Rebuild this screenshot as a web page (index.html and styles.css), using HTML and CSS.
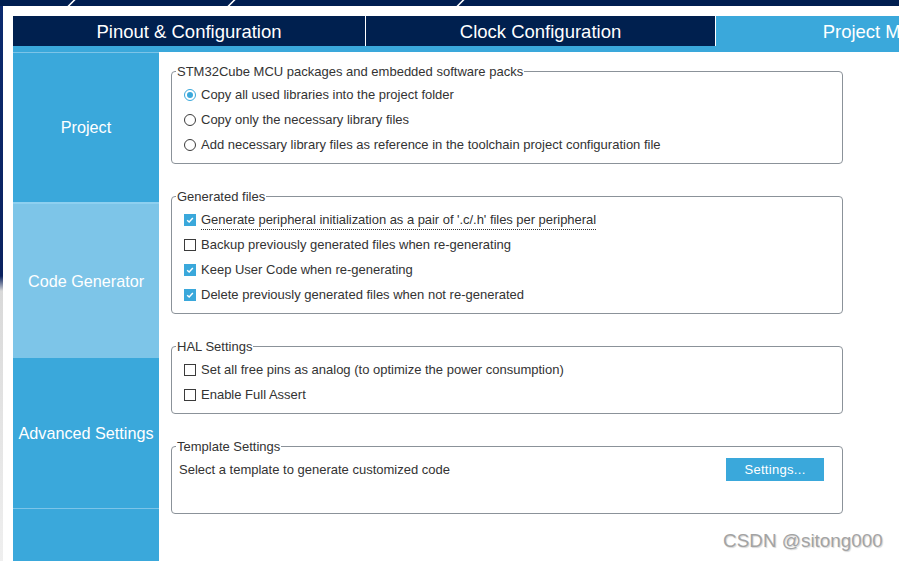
FILE: index.html
```html
<!DOCTYPE html>
<html lang="en">
<head>
<meta charset="utf-8">
<title>Project Manager - Code Generator</title>
<link rel="stylesheet" href="styles.css">
</head>
<body>
<div class="screen">
  <div class="topstrip">
    <svg class="topstrip-lines" width="899" height="6" viewBox="0 0 899 6">
      <path d="M68 6.5 L75 -0.5 M228 6.5 L235 -0.5 M457 6.5 L464 -0.5" stroke="#ffffff" stroke-width="1.6" fill="none"/>
    </svg>
  </div>
  <div class="desk">
    <div class="edge"></div>
    <div class="window">
      <nav class="tabs">
        <div class="tab">Pinout &amp; Configuration</div>
        <div class="tab">Clock Configuration</div>
        <div class="tab active">Project Manager</div>
      </nav>
      <div class="subbar"></div>
      <div class="content">
        <aside class="sidebar">
          <div class="side-item first">Project</div>
          <div class="side-item selected">Code Generator</div>
          <div class="side-item">Advanced Settings</div>
          <div class="side-item last"></div>
        </aside>
        <main class="panel">
          <fieldset class="group rows3">
            <legend>STM32Cube MCU packages and embedded software packs</legend>
            <div class="opt"><span class="radio on"></span><span class="label">Copy all used libraries into the project folder</span></div>
            <div class="opt"><span class="radio"></span><span class="label">Copy only the necessary library files</span></div>
            <div class="opt"><span class="radio"></span><span class="label">Add necessary library files as reference in the toolchain project configuration file</span></div>
          </fieldset>
          <fieldset class="group">
            <legend>Generated files</legend>
            <div class="opt"><span class="check on"><svg width="12" height="12" viewBox="0 0 12 12"><path d="M2.6 6.2 L5 8.5 L9.4 3.6" stroke="#fff" stroke-width="1.7" fill="none"/></svg></span><span class="label focus">Generate peripheral initialization as a pair of '.c/.h' files per peripheral</span></div>
            <div class="opt"><span class="check"></span><span class="label">Backup previously generated files when re-generating</span></div>
            <div class="opt"><span class="check on"><svg width="12" height="12" viewBox="0 0 12 12"><path d="M2.6 6.2 L5 8.5 L9.4 3.6" stroke="#fff" stroke-width="1.7" fill="none"/></svg></span><span class="label">Keep User Code when re-generating</span></div>
            <div class="opt"><span class="check on"><svg width="12" height="12" viewBox="0 0 12 12"><path d="M2.6 6.2 L5 8.5 L9.4 3.6" stroke="#fff" stroke-width="1.7" fill="none"/></svg></span><span class="label">Delete previously generated files when not re-generated</span></div>
          </fieldset>
          <fieldset class="group">
            <legend>HAL Settings</legend>
            <div class="opt"><span class="check"></span><span class="label">Set all free pins as analog (to optimize the power consumption)</span></div>
            <div class="opt"><span class="check"></span><span class="label">Enable Full Assert</span></div>
          </fieldset>
          <fieldset class="group template">
            <legend>Template Settings</legend>
            <div class="opt plain"><span class="label">Select a template to generate customized code</span><button class="btn" type="button">Settings...</button></div>
          </fieldset>
        </main>
      </div>
    </div>
  </div>
  <div class="watermark">CSDN @sitong000</div>
</div>
</body>
</html>
```

FILE: styles.css
```css
html, body {
  margin: 0;
  padding: 0;
}

body {
  width: 899px;
  height: 561px;
  overflow: hidden;
  background: #ffffff;
  font-family: "Liberation Sans", Arial, sans-serif;
}

.screen {
  position: relative;
  width: 899px;
  height: 561px;
  display: flex;
  flex-direction: column;
  overflow: hidden;
}

.topstrip {
  height: 6px;
  background: #001e50;
  flex-shrink: 0;
  overflow: hidden;
}

.topstrip-lines {
  display: block;
}

.desk {
  flex: 1;
  display: flex;
  min-height: 0;
}

.edge {
  width: 3px;
  flex-shrink: 0;
  background: linear-gradient(#0b2a6e 0, #0a2260 270px, #d9d9d9 285px, #efefef 100%);
}

.window {
  flex: 1;
  display: flex;
  flex-direction: column;
  padding: 10px 0 0 10px;
  background: #ffffff;
  min-width: 0;
}

.tabs {
  display: flex;
  height: 30px;
  flex-shrink: 0;
  overflow: hidden;
}

.tab {
  flex-shrink: 0;
  box-sizing: border-box;
  background: #00204f;
  color: #ffffff;
  font-size: 18.5px;
  line-height: 31px;
  text-align: center;
  white-space: nowrap;
  border-right: 1px solid #ffffff;
}

.tab:nth-child(1) {
  width: 353px;
}

.tab:nth-child(2) {
  width: 350px;
}

.tab.active {
  width: 349px;
  background: #3aa8db;
  border-right: none;
}

.subbar {
  height: 6px;
  background: #3aa8db;
  flex-shrink: 0;
}

.content {
  flex: 1;
  display: flex;
  min-height: 0;
}

.sidebar {
  width: 146px;
  flex-shrink: 0;
  display: flex;
  flex-direction: column;
  background: #3aa8db;
}

.side-item {
  box-sizing: border-box;
  display: flex;
  align-items: center;
  justify-content: center;
  color: #ffffff;
  font-size: 16.2px;
  white-space: nowrap;
  height: 150px;
  flex-shrink: 0;
}

.side-item.first {
  border-top: 1px solid #7cc4e8;
}

.side-item.selected {
  height: 156px;
  background: #7dc5e8;
  border-top: 2px solid #8ed0f0;
}

.side-item.last {
  flex: 1;
  height: auto;
  border-top: 1px solid #7cc4e8;
}

.panel {
  flex: 1;
  display: flex;
  flex-direction: column;
  gap: 25px;
  padding: 12px 0 0 12px;
  color: #333333;
  font-size: 13px;
}

.group {
  box-sizing: border-box;
  width: 672px;
  margin: 0;
  min-inline-size: 0;
  border: 1px solid #8b9299;
  border-radius: 4px;
  padding: 3px 0 6px 0;
}

.group legend {
  margin-left: 4px;
  padding: 0 1px;
  line-height: 15px;
  font-size: 13px;
  color: #333333;
}

.opt {
  display: flex;
  align-items: center;
  height: 25px;
  padding-left: 12px;
  white-space: nowrap;
}

.opt.plain {
  padding-left: 7px;
}

.template .opt.plain {
  margin-bottom: 25px;
}

.label {
  line-height: 15px;
}

.label.focus {
  padding-bottom: 2px;
  margin-bottom: -3px;
  border-bottom: 1px dotted #333333;
  letter-spacing: -0.04px;
}

.radio,
.check {
  box-sizing: border-box;
  width: 12px;
  height: 12px;
  flex-shrink: 0;
  margin-right: 5px;
  border: 1px solid #3b3b3b;
  background: #ffffff;
  display: flex;
  align-items: center;
  justify-content: center;
}

.radio {
  border-radius: 50%;
}

.radio.on {
  border-color: #3aa8db;
}

.radio.on::after {
  content: "";
  width: 6px;
  height: 6px;
  border-radius: 50%;
  background: #3aa8db;
}

.check.on {
  border-color: #3aa8db;
  background: #3aa8db;
}

.check svg {
  display: block;
}

.btn {
  margin-left: auto;
  margin-right: 18px;
  width: 98px;
  height: 23px;
  border: none;
  border-radius: 0;
  padding: 0;
  background: #3aa8db;
  color: #ffffff;
  font-family: "Liberation Sans", Arial, sans-serif;
  font-size: 13px;
  letter-spacing: 0.3px;
}

.watermark {
  position: absolute;
  left: 723px;
  top: 530px;
  font-family: "Liberation Sans", Arial, sans-serif;
  font-size: 18.9px;
  line-height: 22px;
  color: #a3a3a3;
  text-shadow: 1px 1px 1px #d6d6d6;
  white-space: nowrap;
}
```
